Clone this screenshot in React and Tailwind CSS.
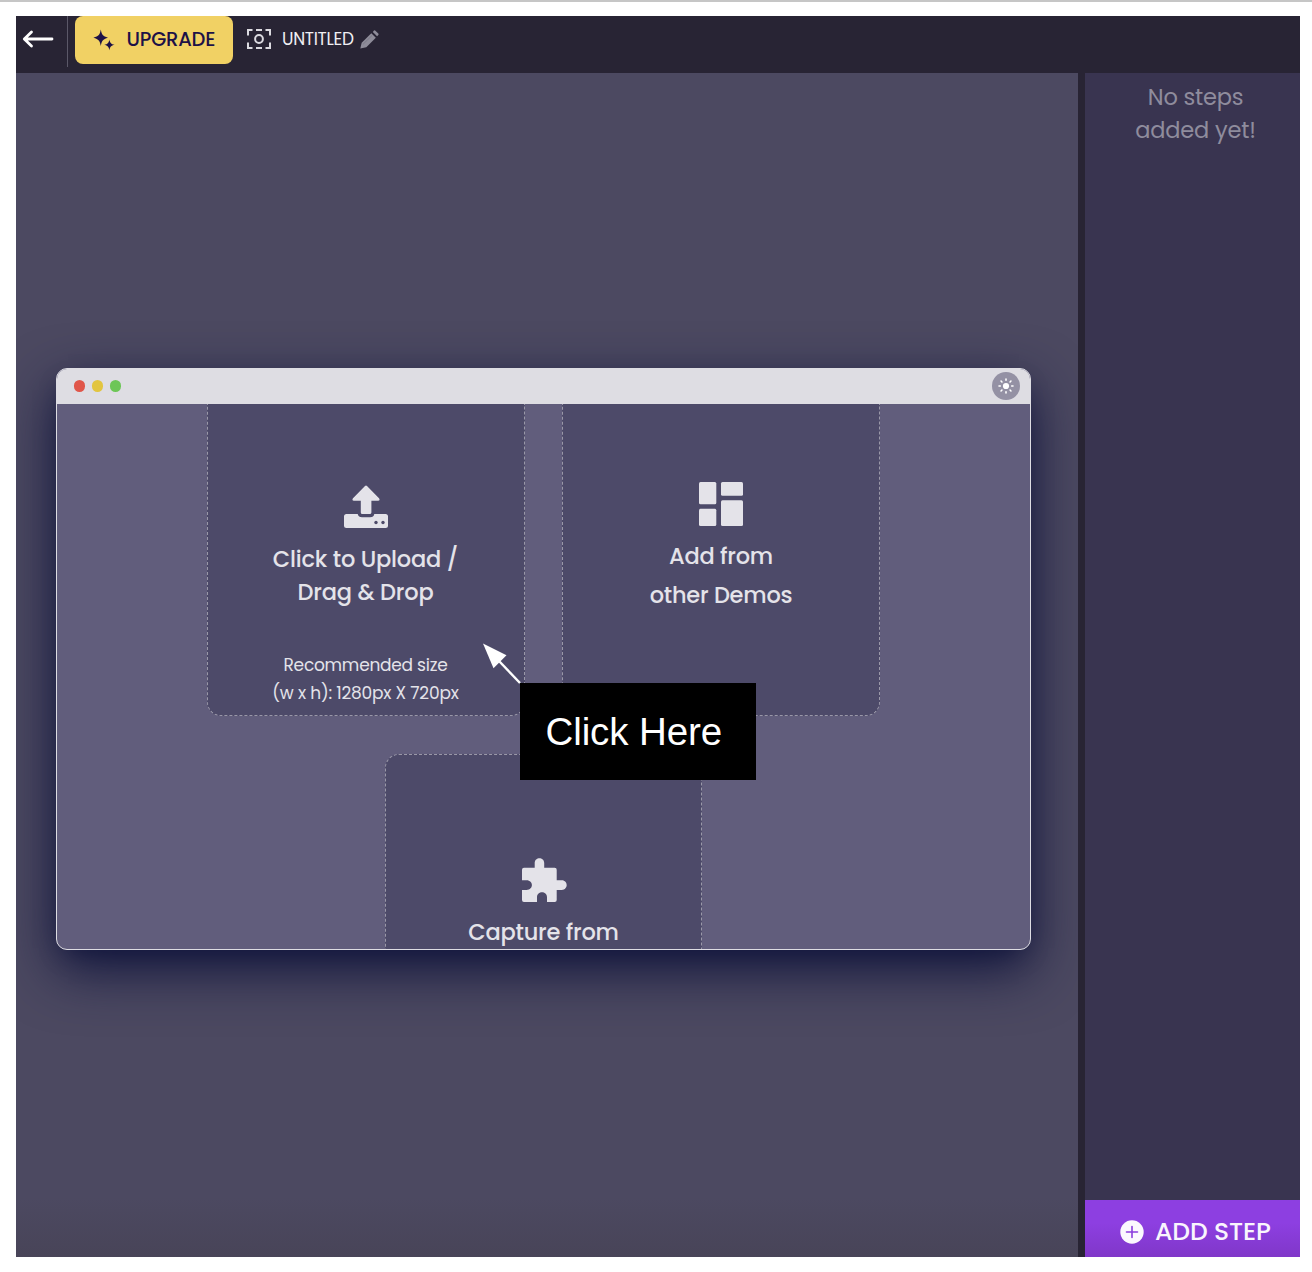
const font = "font-['Poppins','Inter',sans-serif]";

function BackArrow() {
  return (
    <svg className="block h-[18px] w-8" viewBox="0 0 32 18" fill="none" stroke="#fff" strokeWidth="2.8" strokeLinecap="round" strokeLinejoin="round">
      <path d="M30 9H2.5M9.5 2L2.3 9l7.2 7" />
    </svg>
  );
}

function Sparkles() {
  return (
    <svg className="block h-[22px] w-[22px]" viewBox="0 0 22 22" fill="#1d1147">
      <path d="M7.8 .5C8.7 5.700 9.800 7.100 15 8.700C9.800 10.300 8.700 11.700 7.800 16.900C6.900 11.700 5.800 10.300 .4 8.700C5.800 7.100 6.900 5.700 7.800 .5Z" />
      <path d="M16.400 10.400C17 13.700 18 14.900 21.600 15.800C18 16.700 17 17.700 16.400 21.200C15.800 17.700 14.800 16.700 11.200 15.800C14.800 14.900 15.800 13.700 16.400 10.400Z" />
    </svg>
  );
}

function CaptureFrame() {
  return (
    <svg className="block h-5 w-6" viewBox="0 0 24 20" fill="none" stroke="#dcdbe1" strokeWidth="2">
      <path d="M1 6.500V1H5.500M9 1H15M18.500 1H23V6.500M1 13.500V19H5.500M9 19H15M18.500 19H23V13.500" />
      <circle cx="12" cy="10" r="3.900" />
    </svg>
  );
}

function Pencil() {
  return (
    <svg className="block h-[19px] w-[19px]" viewBox="0 0 19 19" fill="#8e8c99">
      <path d="M.3 18.600L1.700 12.700L11.300 3.200L15.800 7.700L6.300 17.200Z" />
      <path d="M12.800 1.900L14 .6Q14.700 0 15.400.7L18.300 3.600Q19 4.300 18.300 5L17.100 6.200Z" />
      <path d="M3 14.300L12 5.500" stroke="#777583" strokeWidth=".8" />
    </svg>
  );
}

function UploadIcon() {
  return (
    <svg className="block h-[43px] w-11" viewBox="0 0 44 43" fill="#e4e3e9">
      <path d="M21 .9Q22 0 23 .9L35 13.200Q36.500 15.700 34 15.700H27.400V27.500Q27.400 29 25.800 29H18.300Q16.800 29 16.800 27.500V15.700H10Q7.500 15.700 9 13.200Z" />
      <path d="M2.500 29H13.700Q14.500 32.300 18 32.300H26.200Q29.700 32.300 30.300 29H41.500Q44 29 44 31.500V40.500Q44 43 41.500 43H2.500Q0 43 0 40.500V31.500Q0 29 2.500 29Z" />
      <circle cx="32" cy="37.500" r="1.700" fill="#4d4a69" />
      <circle cx="39" cy="37.500" r="1.700" fill="#4d4a69" />
    </svg>
  );
}

function DashboardIcon() {
  return (
    <svg className="block h-11 w-11" viewBox="0 0 44 44" fill="#e4e3e9">
      <rect width="17.300" height="22.200" rx="1.500" />
      <rect x="22" width="22" height="13.700" rx="1.500" />
      <rect y="26.800" width="17.300" height="17.200" rx="1.500" />
      <rect x="22" y="18.200" width="22" height="25.800" rx="1.500" />
    </svg>
  );
}

function PuzzleIcon() {
  return (
    <svg className="block h-[46px] w-[46px]" viewBox="0 0 46 46" fill="#e4e3e9">
      <path d="M3 10.700H13.700V6C13.700-.4 23.200-.4 23.200 6V10.700H33.700Q35.700 10.700 35.700 12.700V23.200H40.800C47.300 23.200 47.300 32.900 40.800 32.900H35.700V43Q35.700 45 33.700 45H26V40.200C26 33.700 16 33.700 16 40.200V45H3Q1 45 1 43V33H5.500C12.700 33 12.700 23.200 5.500 23.200H1V12.700Q1 10.700 3 10.700Z" />
    </svg>
  );
}

function Sun() {
  return (
    <svg className="block h-4 w-4" viewBox="0 0 16 16" fill="#fff" stroke="#fff" strokeWidth="1.600" strokeLinecap="round">
      <circle cx="8" cy="8" r="3.100" stroke="none" />
      <path d="M8 1v1.300M8 13.700V15M1 8h1.300M13.700 8H15M3.050 3.050l.9.9M12.050 12.050l.9.9M3.050 12.950l.9-.9M12.050 3.950l.9-.9" />
    </svg>
  );
}

function PlusCircle() {
  return (
    <svg className="block h-6 w-6" viewBox="0 0 24 24">
      <circle cx="12" cy="12" r="11.700" fill="#fbf8fe" />
      <path d="M12 6.500V17.500M6.500 12H17.500" stroke="#8a3ddd" strokeWidth="1.600" strokeLinecap="round" />
    </svg>
  );
}

const card = "box-border shrink-0 border-[1.5px] border-dashed border-[#9a98a8] bg-[#4d4a69] flex flex-col items-center text-[#e4e3e9]";

function Header() {
  return (
    <header className="flex h-[57px] shrink-0 items-start bg-[#282434]">
      <button className="ml-1.5 mt-[14px]"><BackArrow /></button>
      <div className="ml-[13px] h-[51px] w-px bg-[#5b5868]" />
      <button className="ml-[7px] flex h-12 w-[158px] items-center rounded-lg bg-[#f1d164] pb-px pl-[18px] text-[#1d1147]">
        <Sparkles />
        <span className="ml-[11.500px] whitespace-nowrap text-[19.5px] font-medium tracking-[-0.2px]">UPGRADE</span>
      </button>
      <div className="ml-3.5 mt-[13px]"><CaptureFrame /></div>
      <span className="ml-[11px] mt-[11px] w-[72px] whitespace-nowrap text-[17px] leading-6 tracking-[-0.3px] text-[#f0eff3]">UNTITLED</span>
      <div className="ml-1.5 mt-[14px]"><Pencil /></div>
    </header>
  );
}

function DemoWindow() {
  return (
    <section className="ml-10 mt-[295px] flex h-[582px] w-[975px] flex-col overflow-hidden rounded-[11px] border-[1.5px] border-[#dedde3] bg-[#615d7c] shadow-[0_20px_56px_0_#12163d,0_10px_24px_-12px_#12163d]">
      <div className="flex h-[35px] shrink-0 items-center gap-[6.500px] bg-[#dedde3] pb-px pl-[16.500px] pr-2.5">
        <i className="h-[11.500px] w-[11.500px] rounded-full bg-[#e0564a]" />
        <i className="h-[11.500px] w-[11.500px] rounded-full bg-[#e2c540]" />
        <i className="h-[11.500px] w-[11.500px] rounded-full bg-[#6dc657]" />
        <span className="ml-auto flex h-7 w-7 items-center justify-center rounded-full bg-[#9491a4]"><Sun /></span>
      </div>
      <div className="flex flex-1 flex-col items-center overflow-hidden">
        <div className="flex shrink-0 gap-[37px]">
          <div className={card + " h-[312px] w-[318px] rounded-b-[14px] border-t-0 pt-[81px]"}>
            <UploadIcon />
            <div className="mt-[15px] whitespace-nowrap text-center text-[22.5px] font-medium leading-[33px]">
              <p className="-ml-px tracking-[-0.2px]">Click to Upload /</p>
              <p className="-ml-px tracking-[-0.2px]">Drag &amp; Drop</p>
            </div>
            <div className="mt-[42px] whitespace-nowrap text-center text-[17px] leading-7">
              <p className="-ml-px tracking-[-0.25px]">Recommended size</p>
              <p className="-ml-px tracking-[-0.2px]">(w x h): 1280px X 720px</p>
            </div>
          </div>
          <div className={card + " h-[312px] w-[318px] rounded-b-[14px] border-t-0 pt-[78px]"}>
            <DashboardIcon />
            <div className="mt-[11px] whitespace-nowrap text-center text-[22.5px] font-medium leading-[39px]">
              <p className="tracking-[-0.25px]">Add from</p>
              <p className="tracking-[-0.25px]">other Demos</p>
            </div>
          </div>
        </div>
        <div className={card + " mt-[38px] h-[316px] w-[317px] rounded-[14px] pt-[102px]"}>
          <PuzzleIcon />
          <p className="mt-[10px] whitespace-nowrap text-[22.5px] font-medium leading-[39px] tracking-[-0.22px]">Capture from</p>
        </div>
      </div>
    </section>
  );
}

function Callout() {
  return (
    <div className="absolute left-[482px] top-[640px] h-[139px] w-[275px]">
      <svg className="block h-[42px] w-[40px]" viewBox="0 0 40 42">
        <path d="M17 19L38 41" stroke="#fff" strokeWidth="2.400" />
        <path d="M1 1.500L24.500 13.300L11.500 26.300Z" fill="#fff" />
      </svg>
      <div className="-mt-px ml-[38px] flex h-[97px] w-[236px] items-center bg-black pl-[25.500px] font-['Liberation_Sans',Arial,sans-serif] text-[38.5px] tracking-[-0.1px] text-white">
        <span className="whitespace-nowrap">Click Here</span>
      </div>
    </div>
  );
}

export default function App() {
  return (
    <div className={font + " relative h-[1272px] w-[1312px] overflow-hidden border-t-2 border-[#c6c6c6] bg-white"}>
      <div className="ml-4 mt-[14px] flex h-[1241px] w-[1284px] flex-col">
        <Header />
        <div className="flex min-h-0 flex-1 bg-[#282434]">
          <main className="w-[1062px] overflow-hidden bg-[linear-gradient(to_bottom,#4c4961_0%,#4c4961_95%,#484458_100%)]">
            <DemoWindow />
          </main>
          <aside className="ml-[7px] flex w-[215px] flex-col justify-between bg-[#393450]">
            <div className="mt-[8px] whitespace-nowrap pl-[6px] text-center text-[22.5px] leading-[33px] text-[#8f8c9d]">
              <p className="tracking-[-0.2px]">No steps</p>
              <p className="tracking-[-0.2px]">added yet!</p>
            </div>
            <button className="flex h-[57px] items-center bg-linear-to-b from-[#8d3fe1] from-40% to-[#8037c9] pl-[35px] pt-[6px] text-[25px] font-medium text-[#f9f5fd]">
              <PlusCircle />
              <span className="ml-[11px] whitespace-nowrap tracking-[-0.1px]">ADD STEP</span>
            </button>
          </aside>
        </div>
      </div>
      <Callout />
    </div>
  );
}
